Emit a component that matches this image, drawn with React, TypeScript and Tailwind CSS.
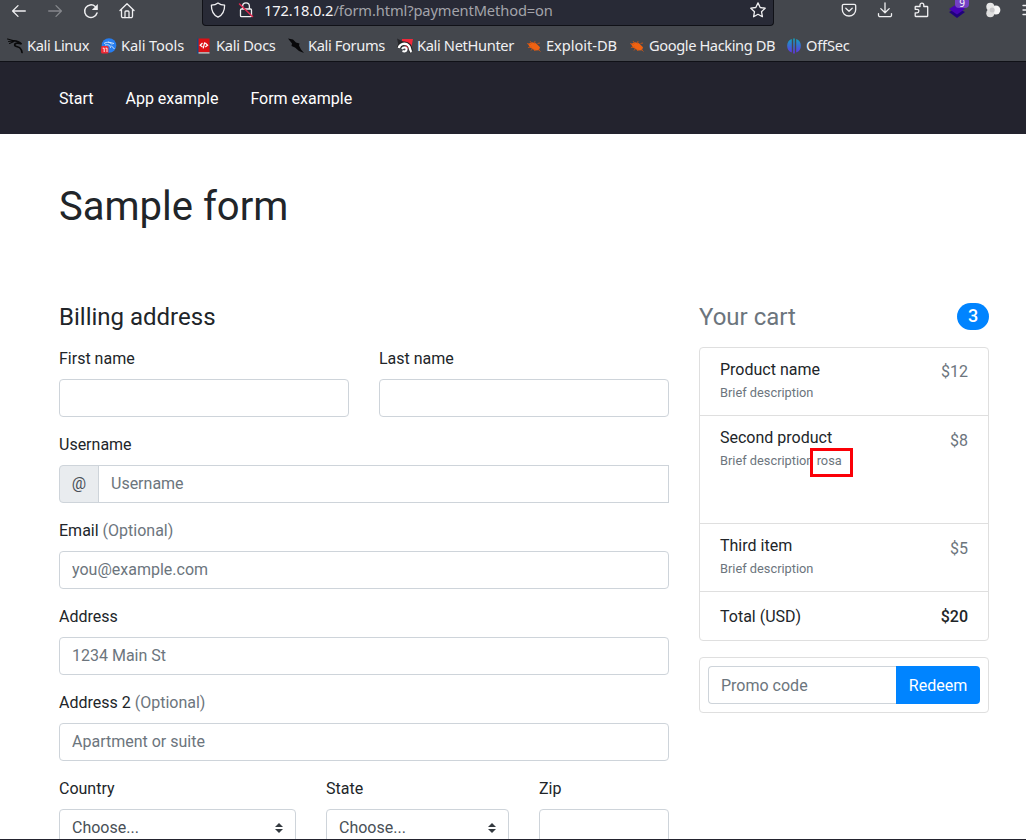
import type { ReactNode } from "react";

function Slot({ children, dim = false }: { children: ReactNode; dim?: boolean }) {
  return (
    <span className={dim ? "flex w-9 shrink-0 justify-center text-[#85878c]" : "flex w-9 shrink-0 justify-center text-[#f0f0f2]"}>
      {children}
    </span>
  );
}

function Icon({ children, className = "" }: { children: ReactNode; className?: string }) {
  return (
    <svg
      width="16"
      height="16"
      viewBox="0 0 16 16"
      fill="none"
      stroke="currentColor"
      strokeWidth="1.3"
      strokeLinecap="round"
      strokeLinejoin="round"
      className={"shrink-0 " + className}
    >
      {children}
    </svg>
  );
}

function Toolbar() {
  return (
    <div className="flex h-[26px] w-[1050px] shrink-0 items-start pl-px">
      <div className="flex w-[201px] pt-[3px]">
        <Slot><Icon><path d="M14.3 8H1.8M7 2.6 1.6 8 7 13.4" /></Icon></Slot>
        <Slot dim><Icon><path d="M1.7 8h12.5M9 2.6 14.4 8 9 13.4" /></Icon></Slot>
        <Slot>
          <Icon>
            <path d="M14 10A6.300 6.300 0 1 1 12.200 3.500" strokeWidth="1.500" />
            <path d="M14.800 1v6H8.800z" fill="currentColor" stroke="none" />
          </Icon>
        </Slot>
        <Slot>
          <Icon>
            <path d="M1 7.500 8 .8 15 7.500M2.500 6.500v6.700a1.500 1.500 0 0 0 1.500 1.500h8a1.500 1.500 0 0 0 1.500-1.500V6.500" />
            <path d="M6 14.500V9a1 1 0 0 1 1-1h2a1 1 0 0 1 1 1v5.500" />
          </Icon>
        </Slot>
      </div>
      <div className="flex h-[26px] w-[572px] items-start rounded-b border-x border-b border-[#101117] bg-[#282a36] pl-[7px] text-[#f0f0f2]">
        <Icon className="mt-[2px]">
          <path d="M8 .9c2 1.5 4.2 2.1 6.600 2.300C14.700 8.800 12.500 13 8 15.200 3.500 13 1.300 8.800 1.400 3.200 3.800 3 6 2.400 8 .9z" />
        </Icon>
        <Icon className="ml-[12px] mt-[2px]">
          <path d="M4.600 7V4.200a3.400 3.400 0 0 1 6.800 0V7M3.500 7h9a1 1 0 0 1 1 1v5.700a1 1 0 0 1-1 1h-9a1 1 0 0 1-1-1V8a1 1 0 0 1 1-1z" />
          <path d="M1.500 2 14.500 14.500" stroke="#e22850" strokeWidth="1.500" />
        </Icon>
        <span className="ml-[10px] w-[486px] whitespace-nowrap text-[14.67px] leading-[20px] tracking-[-0.11px] text-[#a3a4aa]">
          <span className="text-[#f6f6f8]">172.18.0.2</span>/form.html?paymentMethod=on
        </span>
        <Icon className="mt-[2px]">
          <path d="m8 .9 2.200 4.600 5 .7-3.700 3.500.9 5L8 12.300l-4.400 2.400.9-5L.8 6.200l5-.7z" />
        </Icon>
      </div>
      <div className="ml-[57px] flex pt-[2px]">
        <Slot>
          <Icon>
            <path d="M2.800 2.300h10.400a1.500 1.500 0 0 1 1.500 1.500v4a6.700 6.200 0 0 1-13.400 0v-4a1.500 1.500 0 0 1 1.500-1.500z" />
            <path d="M4.800 6.300 8 9.300l3.200-3" />
          </Icon>
        </Slot>
        <Slot>
          <Icon><path d="M8 .8v9.800M3.800 6.600 8 10.800l4.200-4.200M1.500 11.600v1.600a1.500 1.500 0 0 0 1.500 1.500h10a1.500 1.500 0 0 0 1.500-1.500v-1.600" /></Icon>
        </Slot>
        <Slot>
          <Icon>
            <path d="M2.700 14.500h11.500a.5.5 0 0 0 .5-.5V5a.5.500 0 0 0-.5-.5h-3.400V3a1.900 1.900 0 0 0-3.800 0v1.500H2.700a.5.500 0 0 0-.5.500v2.300h1.900a1.700 1.700 0 0 1 0 3.500H2.200V14a.5.500 0 0 0 .5.500z" />
          </Icon>
        </Slot>
        <Slot>
          <span className="relative flex">
            <svg width="18" height="18" viewBox="0 0 18 18" className="-mt-px">
              <path d="m1 11 8-4 8 4-8 6z" fill="#20037c" />
              <path d="m1 8 8-5 8 5-8 5.500z" fill="#4604b4" />
            </svg>
            <span className="absolute -top-[2px] left-[7px] h-[8px] w-[14px] rounded-b-sm bg-[#7441c4] text-center text-[10px] leading-[6px] text-white">9</span>
          </span>
        </Slot>
        <Slot>
          <svg width="16" height="16" viewBox="0 0 16 16">
            <circle cx="10.900" cy="8" r="4.500" fill="#f5f5f5" />
            <circle cx="5.300" cy="4.700" r="4" fill="#e7e7e7" />
            <circle cx="5.300" cy="11.300" r="4" fill="#dedede" />
            <circle cx="7.200" cy="8" r="2.500" fill="#c7c7c9" />
          </svg>
        </Slot>
        <Slot><Icon><path d="M2 3.500h12M2 8h12M2 12.500h12" /></Icon></Slot>
      </div>
    </div>
  );
}

function ExploitBug() {
  return (
    <svg width="16" height="16" viewBox="0 0 16 16">
      <path d="M2 6 6 4.300l4 1 4 4-1 3-4 .2-5-3z" fill="#ef6212" />
      <path d="M1 5.500l4 1M4 3l2 3M9 3l-.5 3M11.500 5.500 14 5M2 9.500 6 9M5 12.500l2-2.500M8.500 13l.5-2M12 11l2.500 2.500" stroke="#d95510" strokeWidth=".8" />
    </svg>
  );
}

const bookmarks: { label: string; width: string; tracking: string; icon: ReactNode }[] = [
  {
    label: "Kali Linux",
    width: "w-[94px]",
    tracking: "tracking-[-0.4px]",
    icon: (
      <svg width="16" height="16" viewBox="0 0 16 16" fill="none" stroke="#0a0a0b" strokeLinecap="round">
        <path d="M.5 1 6 2.500M1.500 3.500 6 3M2.500 5.500 7 3.500" strokeWidth="1.100" />
        <path d="M6 2.800c4-.3 6.500 1 8.500 3.200-2.500-1-6.500-1.500-6.800.8-.2 2 3.800 1.700 5.300 3.200 1.200 1.200 1.800 2.500 2 4.500" strokeWidth="1.700" />
      </svg>
    ),
  },
  {
    label: "Kali Tools",
    width: "w-[95px]",
    tracking: "tracking-[-0.13px]",
    icon: (
      <svg width="16" height="16" viewBox="0 0 16 16">
        <circle cx="8" cy="7.500" r="7.300" fill="#267df0" />
        <path d="M3 5.500c3-2 6-1.500 8 1M4 7c4-1 5.500 1 5.500 3M7 4l6 1.500M10 7.500l3.500 3.500" fill="none" stroke="#d4e6fc" />
        <rect y="8" width="7.500" height="7.500" rx="1.500" fill="#eb2935" />
        <path d="M1.700 10.200h1.500v3.800M4.500 10.200H6v3.800" fill="none" stroke="#fff" strokeWidth=".9" />
      </svg>
    ),
  },
  {
    label: "Kali Docs",
    width: "w-[92px]",
    tracking: "tracking-[-0.3px]",
    icon: (
      <svg width="16" height="16" viewBox="0 0 16 16">
        <path d="M1 .5h2v15H1z" fill="#194a7c" />
        <path d="M2.500.5H13.500v13.800H2.500z" fill="#dc1015" />
        <path d="M2.500 14.300h11v1.200h-11z" fill="#dadada" />
        <path d="M6.500 5 4.200 7.200l2.300 1.800M9.300 5l2.300 2.200L9.300 9M8.700 4.300l-1.500 6" fill="none" stroke="#fff" strokeWidth="1.200" />
      </svg>
    ),
  },
  {
    label: "Kali Forums",
    width: "w-[109px]",
    tracking: "tracking-[-0.37px]",
    icon: (
      <svg width="16" height="16" viewBox="0 0 16 16">
        <path d="m0 .5 5 1 3 3 3.500 1-.5 2 2 4 3 3.500-5-2L7 9.500 3.500 8 4 5.500z" fill="#08080a" />
      </svg>
    ),
  },
  {
    label: "Kali NetHunter",
    width: "w-[129px]",
    tracking: "tracking-[-0.36px]",
    icon: (
      <svg width="16" height="16" viewBox="0 0 16 16">
        <path d="M5 1h11l-1.500 7.500-.5 5.500-9-9z" fill="#f0283a" />
        <path d="M0 .5 7 4 1.500 7z" fill="#26272b" />
        <path d="M2 10C3 5 9 4 12 7.500c2 2.500 1 5 2.500 6.500" fill="none" stroke="#222" strokeWidth="4" />
        <path d="M1.800 10C3 5.500 8.500 4.500 11.500 7.500c2.300 2.300 1 5 3 6.500" fill="none" stroke="#fff" strokeWidth="2.400" />
        <path d="M5 11c1.500-2.500 5-1.500 4.500.8-.3 1.500-2 2-4 1.200" fill="none" stroke="#fff" strokeWidth="2" />
      </svg>
    ),
  },
  { label: "Exploit-DB", width: "w-[103px]", tracking: "tracking-[-0.05px]", icon: <ExploitBug /> },
  { label: "Google Hacking DB", width: "w-[157px]", tracking: "tracking-[-0.41px]", icon: <ExploitBug /> },
  {
    label: "OffSec",
    width: "w-[90px]",
    tracking: "tracking-[-0.2px]",
    icon: (
      <svg width="16" height="16" viewBox="0 0 16 16">
        <defs>
          <linearGradient id="offsec" x1="0" y1="0" x2="0" y2="1">
            <stop offset="0" stopColor="#10a5bd" />
            <stop offset="1" stopColor="#6330e8" />
          </linearGradient>
        </defs>
        <path d="M5.800 1v13.600A7.300 7.300 0 0 1 5.800 1zM10.200 1v13.600a7.300 7.300 0 0 0 0-13.600zM7.200.4h1.600v15.200H7.200z" fill="url(#offsec)" />
      </svg>
    ),
  },
];

function Bookmarks() {
  return (
    <div className="flex h-[35px] shrink-0 items-center pl-[7px] pt-[4px] text-[14.67px] text-[#f0f0f2]">
      {bookmarks.map((b) => (
        <a key={b.label} className={"flex shrink-0 items-center gap-1 whitespace-nowrap " + b.width}>
          <span className="shrink-0">{b.icon}</span>
          <span className={"pb-[2px] " + b.tracking}>{b.label}</span>
        </a>
      ))}
    </div>
  );
}

function Field({ label, optional = false, placeholder, className = "" }: { label: string; optional?: boolean; placeholder?: string; className?: string }) {
  return (
    <label className={"mb-4 block " + className}>
      <span className="mb-2 block">
        {label}
        {optional && <span className="text-[#6c757d]"> (Optional)</span>}
      </span>
      <input
        placeholder={placeholder}
        className="block h-[38px] w-full rounded border border-[#ced4da] bg-white px-3 pb-[7px] pt-[5px] placeholder:text-[#6c757d]"
      />
    </label>
  );
}

function Choice({ label, className }: { label: string; className: string }) {
  return (
    <div className={className}>
      <div className="mb-2">{label}</div>
      <div className="flex h-[38px] items-center justify-between rounded border border-[#ced4da] px-3 text-[#495057]">
        Choose...
        <svg width="8" height="10" viewBox="0 0 4 5"><path fill="#343a40" d="M2 0 0 2h4zm0 5L0 3h4z" /></svg>
      </div>
    </div>
  );
}

function Product({ name, price, className = "h-[68px]", priceClass = "", note }: { name: string; price: string; className?: string; priceClass?: string; note?: string }) {
  return (
    <li className={"flex justify-between border-b border-[#dfdfdf] px-5 pt-3 " + className}>
      <div>
        <h6 className="leading-[19.2px]">{name}</h6>
        <div className="text-[12.8px] leading-[28px] text-[#6c757d]">
          Brief description
          {note && (
            <span className="relative">
              {" "}{note}
              <span className="absolute -left-[3px] -top-[5px] h-[29px] w-[43px] border-[3px] border-[#fb0007]" />
            </span>
          )}
        </div>
      </div>
      <span className={"text-[#6c757d] " + priceClass}>{price}</span>
    </li>
  );
}

export default function App() {
  return (
    <div className="flex h-[840px] w-[1026px] flex-col overflow-hidden border-b border-[#23232e] bg-white">
      <header className="flex h-[62px] shrink-0 flex-col overflow-hidden border-b border-[#101117] bg-[#44474d] font-['Noto_Sans',sans-serif]">
        <Toolbar />
        <Bookmarks />
      </header>
      <div className="min-h-0 flex-1 overflow-hidden font-['Roboto',sans-serif] text-base leading-6 text-[#212529]">
        <nav className="flex h-[72px] items-center gap-8 bg-[#23232e] px-[59px] pt-[2px] text-white">
          <a>Start</a>
          <a>App example</a>
          <a>Form example</a>
        </nav>
        <main className="px-[59px] pt-[49px]">
          <h1 className="text-[40px] leading-[48px]">Sample form</h1>
          <div className="mt-[71px] flex gap-[30px]">
            <form className="w-[610px] shrink-0">
              <h4 className="mb-[14px] text-2xl leading-[31px]">Billing address</h4>
              <div className="flex gap-[30px]">
                <Field label="First name" className="flex-1" />
                <Field label="Last name" className="flex-1" />
              </div>
              <div className="mb-4">
                <div className="mb-2">Username</div>
                <div className="flex h-[38px]">
                  <span className="flex w-[40px] shrink-0 items-center justify-center rounded-l border border-[#ced4da] bg-[#e9ecef] text-[#495057]">@</span>
                  <input placeholder="Username" className="-ml-px min-w-0 flex-1 border border-[#ced4da] px-3 placeholder:text-[#6c757d]" />
                </div>
              </div>
              <Field label="Email" optional placeholder="you@example.com" />
              <Field label="Address" placeholder="1234 Main St" />
              <Field label="Address 2" optional placeholder="Apartment or suite" />
              <div className="flex gap-[30px]">
                <Choice label="Country" className="w-[237px]" />
                <Choice label="State" className="w-[183px]" />
                <Field label="Zip" className="w-[130px]" />
              </div>
            </form>
            <aside className="w-[290px] shrink-0">
              <h4 className="mb-4 flex h-[29px] items-center justify-between text-2xl leading-[29px] text-[#6c757d]">
                <span className="pt-[2px]">Your cart</span>
                <span className="flex h-[27px] w-8 items-center justify-center rounded-full bg-[#0084ff] pb-[2px] text-lg font-medium leading-none text-white">3</span>
              </h4>
              <ul className="mb-4 rounded border border-[#dfdfdf]">
                <Product name="Product name" price="$12" />
                <Product name="Second product" price="$8" className="h-[108px]" priceClass="pt-px" note="rosa" />
                <Product name="Third item" price="$5" priceClass="pt-px" />
                <li className="flex h-[48px] items-center justify-between px-5 pt-[2px]">
                  <span>Total (USD)</span>
                  <strong className="font-medium">$20</strong>
                </li>
              </ul>
              <div className="flex h-[56px] rounded border border-[#dfdfdf] p-2">
                <input placeholder="Promo code" className="h-[38px] min-w-0 flex-1 rounded-l border border-r-0 border-[#ced4da] px-3 placeholder:text-[#6c757d]" />
                <button className="h-[38px] w-[84px] rounded-r bg-[#0084ff] pt-[2px] text-white">Redeem</button>
              </div>
            </aside>
          </div>
        </main>
      </div>
    </div>
  );
}
